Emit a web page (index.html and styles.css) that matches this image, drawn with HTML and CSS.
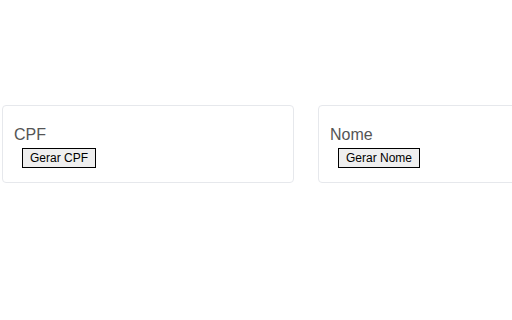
FILE: index.html
```html
<!DOCTYPE html>
<html lang="pt">
<head>
<meta charset="utf-8">
<link rel="stylesheet" href="styles.css">
</head>
<body>
<div class="row">
  <div class="card">
    <div class="label">CPF</div>
    <button class="btn">Gerar CPF</button>
  </div>
  <div class="card">
    <div class="label">Nome</div>
    <button class="btn">Gerar Nome</button>
  </div>
</div>
</body>
</html>
```
FILE: styles.css
```css
html, body {
  margin: 0;
  padding: 0;
  background: #fff;
}
.row {
  display: flex;
  gap: 24px;
  padding: 105px 0 0 2px;
  overflow: hidden;
}
.card {
  box-sizing: border-box;
  flex: 0 0 292px;
  height: 78px;
  border: 1px solid #e6e8ec;
  border-radius: 4px;
  padding: 20px 11px 14px;
  display: flex;
  flex-direction: column;
  align-items: flex-start;
}
.label {
  font-family: "Liberation Sans", Arial, sans-serif;
  font-size: 16px;
  color: #555;
  line-height: 18px;
}
.btn {
  margin: 4px 0 0 8px;
  font-family: "Liberation Sans", Arial, sans-serif;
  font-size: 12px;
  color: #000;
  background: #efefef;
  border: 1px solid #000;
  border-radius: 0;
  padding: 1px 7px;
  height: 20px;
  line-height: 16px;
}
```
